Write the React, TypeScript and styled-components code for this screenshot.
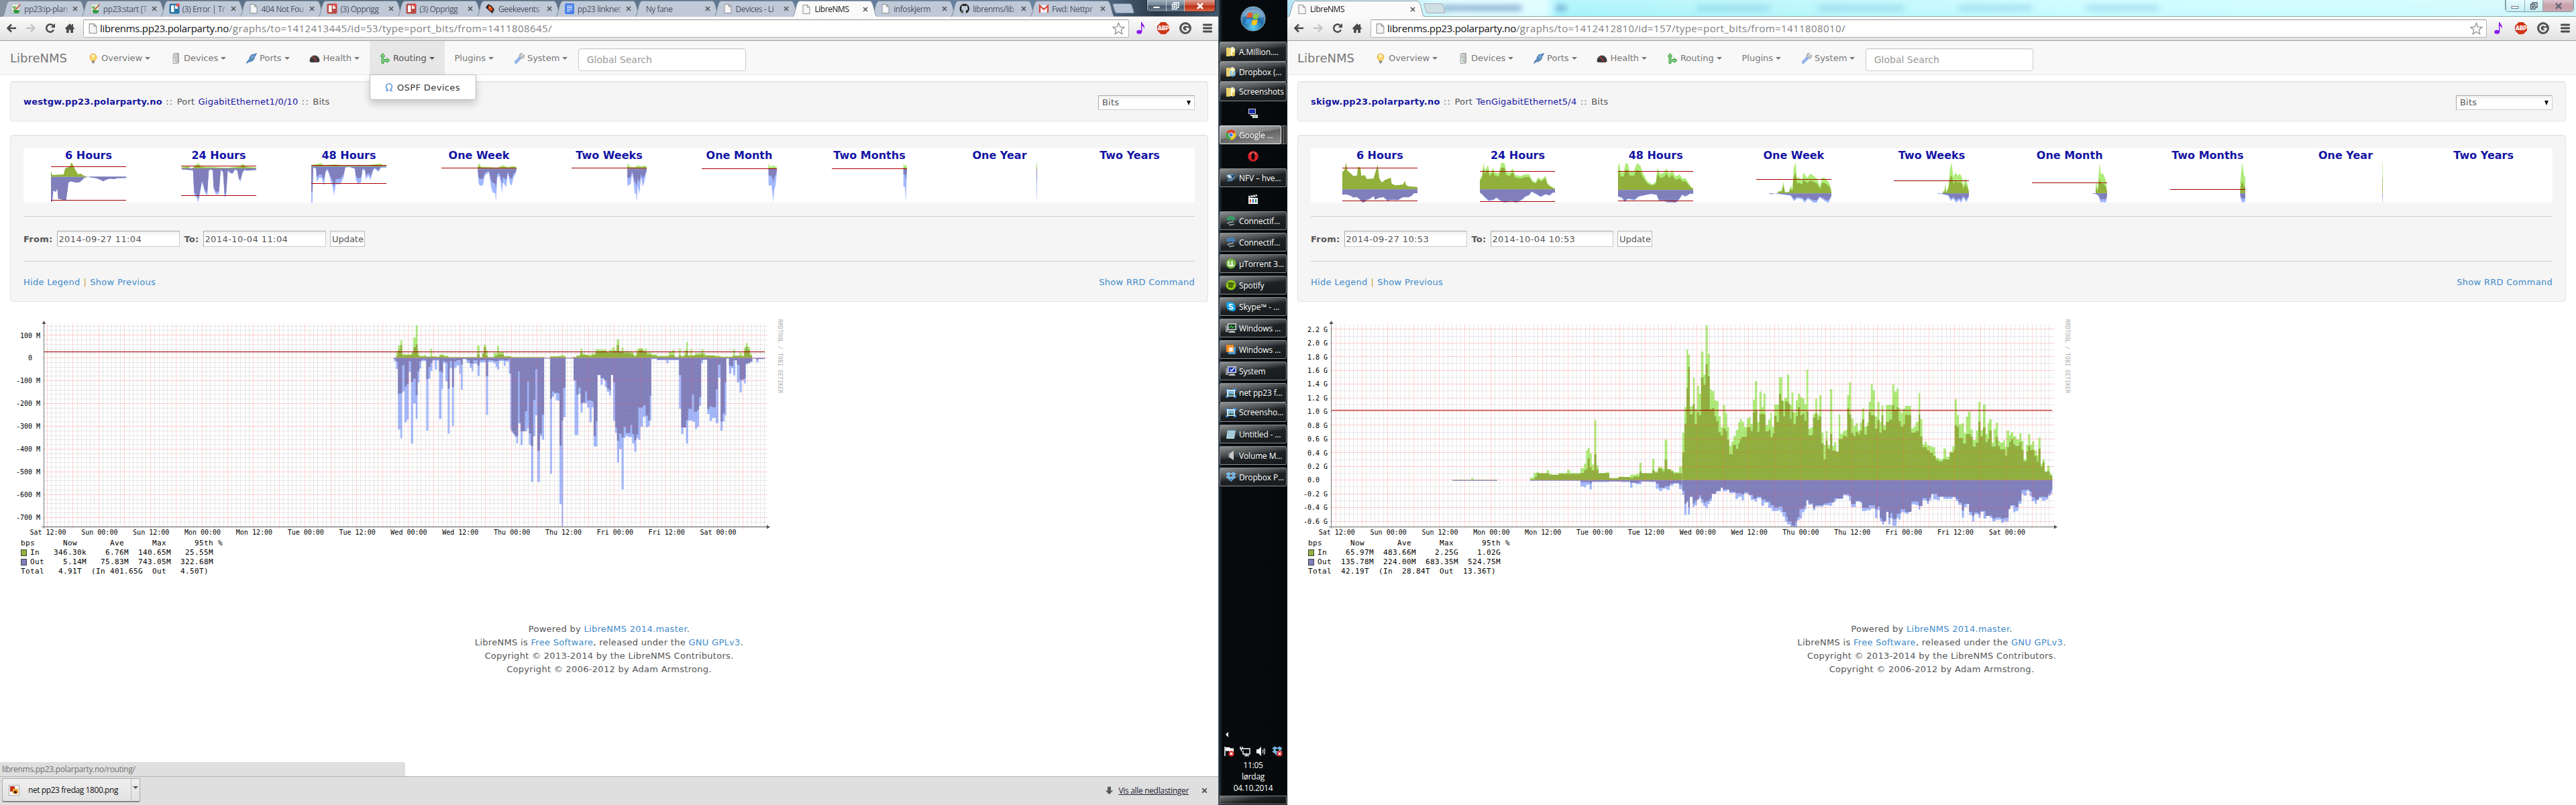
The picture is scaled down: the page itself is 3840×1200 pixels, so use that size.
import React from "react";
import styled, { createGlobalStyle, css } from "styled-components";

const SANS = `"DejaVu Sans", Verdana, sans-serif`;
const UI = `"Open Sans", "Noto Sans", sans-serif`;
const MONO = `"DejaVu Sans Mono", monospace`;

const Global = createGlobalStyle`
  * { box-sizing: border-box; }
  body { margin: 0; background: #fff; font-family: ${SANS}; font-size: 13px; color: #555; }
  svg { display: block; flex: none; }
`;

const Desktop = styled.div`
  display: flex;
  width: 3840px;
  height: 1200px;
  overflow: hidden;
`;

const BrowserWindow = styled.section<{ $w: number }>`
  display: flex;
  flex-direction: column;
  width: ${(p) => p.$w}px;
  height: 1200px;
  background: #fff;
  overflow: hidden;
`;

/* ---------- tab strip ---------- */

const TabStrip = styled.div<{ $light?: boolean }>`
  position: relative;
  display: flex;
  height: 25px;
  padding-left: ${(p) => (p.$light ? 1 : 3)}px;
  border-bottom: 1px solid ${(p) => (p.$light ? "#8fa9ac" : "#8b929b")};
  background: ${(p) =>
    p.$light
      ? "linear-gradient(180deg, rgba(255,255,255,.2), rgba(255,255,255,0)), linear-gradient(90deg,#a9dff6 0,#c9f6fb 11%,#e2fdff 13%,#dcfcff 20%,#a6f3fb 21%,#b6f6fb 40%,#c6fbff 60%,#ccfdff 85%,#d3f6fb 100%)"
      : "linear-gradient(90deg,#8794a2 0,#6b7c91 5%,#50687f 30%,#5f7893 60%,#6784a6 88%,#2b3a49 95%,#40566a 100%)"};
`;

const TabBox = styled.div<{ $w: number; $active?: boolean }>`
  position: relative;
  display: flex;
  align-items: center;
  width: ${(p) => p.$w}px;
  height: ${(p) => (p.$active ? 25 : 24)}px;
  margin-right: -9px;
  padding: 2px 12px 0 13px;
  z-index: ${(p) => (p.$active ? 2 : 1)};
  font: 12px ${UI};
  letter-spacing: -0.45px;
  color: ${(p) => (p.$active ? "#111" : "#48515c")};
`;

const TabShape = styled.svg`
  position: absolute;
  left: 0;
  top: 0;
  z-index: -1;
`;

const TabTitle = styled.span`
  flex: 1;
  min-width: 0;
  margin-left: 4px;
  white-space: nowrap;
  overflow: hidden;
  mask-image: linear-gradient(90deg, #000 80%, transparent 100%);
`;

const NewTab = styled.div<{ $light?: boolean }>`
  width: 29px;
  height: 15px;
  margin: 5px 0 0 ${(p) => (p.$light ? 9 : 7)}px;
  border: 1px solid ${(p) => (p.$light ? "#aab" : "#76879a")};
  border-radius: 3px;
  background: ${(p) => (p.$light ? "#cfdfe4" : "#b5c3d4")};
  transform: skewX(18deg);
`;

const Caption = styled.div<{ $light?: boolean }>`
  display: flex;
  width: 103px;
  height: 18px;
  margin: 0 ${(p) => (p.$light ? 3 : 4)}px 0 auto;
  border: 1px solid ${(p) => (p.$light ? "#7d9aa0" : "#20262e")};
  border-top: 0;
  border-radius: 0 0 5px 5px;
  overflow: hidden;
`;

const CaptionButton = styled.div<{ $light?: boolean; $close?: boolean }>`
  display: flex;
  align-items: center;
  justify-content: center;
  flex: ${(p) => (p.$close ? "0 0 46px" : "1")};
  border-left: 1px solid ${(p) => (p.$light ? "#8fb0b5" : "#c0c8d0")};
  background: ${(p) =>
    p.$close
      ? p.$light
        ? "linear-gradient(#dcc5cf,#c9a0a8 50%,#cba8b2)"
        : "linear-gradient(#e0a091,#c9513b 48%,#b92c12 52%,#d9694a)"
      : p.$light
        ? "linear-gradient(#e6fcff,#c7eef2)"
        : "linear-gradient(#a5b3bf,#6d7f8f 48%,#45566a 52%,#6c8293)"};
`;

const GhostLabel = styled.span<{ $left: number; $w: number; $dark?: boolean }>`
  position: absolute;
  left: ${(p) => p.$left}px;
  top: 8px;
  width: ${(p) => p.$w}px;
  height: 8px;
  border-radius: 5px;
  background: ${(p) => (p.$dark ? "rgba(60, 110, 175, 0.55)" : "rgba(80, 160, 205, 0.3)")};
  filter: blur(4px);
`;

/* ---------- toolbar ---------- */

const Toolbar = styled.div`
  display: flex;
  align-items: center;
  height: 36px;
  padding: 0 7px 1px 9px;
  border-bottom: 1px solid #a1a1a1;
  background: linear-gradient(#fbfbfb, #e2e2e2);
`;

const NavIcons = styled.div`
  display: flex;
  gap: 13px;
  width: 115px;
`;

const AddressBar = styled.div`
  display: flex;
  align-items: center;
  flex: 1;
  height: 27px;
  padding: 0 5px 0 5px;
  border: 1px solid #b5b5b5;
  border-top-color: #979797;
  border-radius: 2px;
  background: #fff;
  font: 15px ${UI};
  letter-spacing: 0.41px;
  color: #808080;
  white-space: pre;
  b { font-weight: 400; color: #111; margin-left: 2px; letter-spacing: -0.3px; }
  svg:last-child { margin-left: auto; }
`;

const Extensions = styled.div`
  display: flex;
  align-items: center;
  gap: 15px;
  padding-left: 9px;
`;

/* ---------- site navigation ---------- */

const Navbar = styled.nav`
  display: flex;
  height: 51px;
  padding-left: 15px;
  border-bottom: 1px solid #e7e7e7;
  background: #f8f8f8;
  color: #777;
`;

const Brand = styled.div`
  width: 101px;
  padding-top: 14px;
  font-size: 18px;
  line-height: 24px;
`;

const NavItem = styled.div<{ $open?: boolean }>`
  position: relative;
  display: flex;
  align-items: center;
  height: 50px;
  padding: 1px 14.8px 0 15px;
  gap: 4px;
  ${(p) => p.$open && css`background: #e7e7e7; color: #555;`}
`;

const Caret = styled.i`
  border: 4px solid transparent;
  border-top-color: currentColor;
  border-bottom: 0;
`;

const Dropdown = styled.div`
  position: absolute;
  left: 0;
  top: 50px;
  z-index: 3;
  display: flex;
  align-items: center;
  gap: 5px;
  width: 159px;
  height: 38px;
  padding-left: 21px;
  border: 1px solid #bbb;
  border-radius: 0 0 4px 4px;
  background: #fff;
  box-shadow: 0 6px 12px rgba(0, 0, 0, 0.18);
  color: #333;
  letter-spacing: 0.4px;
  white-space: nowrap;
`;

const Search = styled.input`
  width: 250px;
  height: 34px;
  margin: 11px 0 0 0.5px;
  padding: 0 12px;
  border: 1px solid #ccc;
  border-radius: 4px;
  box-shadow: inset 0 1px 1px rgba(0, 0, 0, 0.075);
  font: 14px ${SANS};
  &::placeholder { color: #999; opacity: 1; }
`;

/* ---------- page ---------- */

const Well = styled.div<{ $h: number; $mt: number }>`
  height: ${(p) => p.$h}px;
  margin: ${(p) => p.$mt}px 15px 0;
  padding: 19px;
  border: 1px solid #e3e3e3;
  border-radius: 4px;
  background: #f5f5f5;
  box-shadow: inset 0 1px 1px rgba(0, 0, 0, 0.05);
`;

const Crumbs = styled.div`
  display: flex;
  justify-content: space-between;
  align-items: flex-start;
  line-height: 22px;
  letter-spacing: 0.2px;
  span { word-spacing: 1px; }
  i { font-style: normal; letter-spacing: 1.2px; }
  a, b { color: #1515a0; }
  b { letter-spacing: 0.24px; }
`;

const Select = styled.div`
  display: flex;
  align-items: center;
  justify-content: space-between;
  width: 144px;
  height: 22px;
  margin-top: 1px;
  padding: 0 5px;
  border: 1px solid #ccc;
  border-color: #aaa #ccc #ccc #aaa;
  background: linear-gradient(#eee, #fff 6px);
`;

const SelectArrow = styled.div`
  border: 3.5px solid transparent;
  border-top: 7px solid #111;
  border-bottom: 0;
`;

const Strip = styled.div`
  display: grid;
  grid-template-columns: repeat(9, 1fr);
  height: 81px;
  background: #fff;
`;

const StripCell = styled.div`
  display: flex;
  flex-direction: column;
  align-items: center;
  h4 { margin: 0; height: 21px; font: bold 16px/21px ${SANS}; color: #1414a4; white-space: nowrap; }
`;

const Rule = styled.hr`
  height: 1px;
  margin: 20px 0;
  border: 0;
  background: #ccc;
`;

const RangeForm = styled.form`
  display: flex;
  align-items: center;
  height: 26px;
  b { letter-spacing: 0.25px; }
`;

const DateInput = styled.input`
  width: 183px;
  height: 24px;
  margin: 0 6px 0 7px;
  padding: 0 1px;
  border: 1px solid #ccc;
  border-color: #aaa #ccc #ccc #aaa;
  background: linear-gradient(#eee, #fff 7px);
  font: 13px ${SANS};
  letter-spacing: 0.42px;
  color: #555;
`;

const UpdateButton = styled.button`
  width: 52px;
  height: 24px;
  padding: 0;
  border: 1px solid #bbb;
  background: linear-gradient(#f0f0f0, #fff 7px);
  font: 13px ${SANS};
  color: #555;
`;

const Links = styled.div`
  display: flex;
  gap: 5px;
  padding-top: 1px;
  line-height: 20px;
  letter-spacing: 0.28px;
  color: #c93;
  a { color: #428bca; }
  a:last-child { margin-left: auto; }
`;

const GraphArea = styled.div`
  height: 478px;
  padding-top: 10px;
`;

const Legend = styled.div`
  margin-left: 31px;
  font: 11px/14px ${MONO};
  letter-spacing: 0.38px;
  color: #000;
  white-space: pre;
`;

const LegendRow = styled.div`
  display: flex;
  align-items: center;
  height: 14px;
`;

const Swatch = styled.span<{ $c: string }>`
  width: 9px;
  height: 10px;
  margin-right: 5px;
  border: 1px solid #444;
  background: ${(p) => p.$c};
`;

const Footer = styled.footer`
  text-align: center;
  line-height: 20px;
  letter-spacing: 0.3px;
  a { color: #428bca; }
`;

const StatusBubble = styled.div`
  width: 604px;
  height: 21px;
  margin-top: auto;
  padding: 1px 3px;
  border-radius: 0 4px 0 0;
  background: #dfdfdf;
  font: 12px/19px ${UI};
  letter-spacing: -0.3px;
  color: #707070;
`;

const Shelf = styled.div`
  display: flex;
  align-items: center;
  height: 43px;
  padding: 0 14px 2px 3px;
  border-top: 1px solid #b5b5b5;
  background: #dfdfdf;
  font: 12px ${UI};
  color: #111;
`;

const Download = styled.div`
  display: flex;
  align-items: center;
  width: 206px;
  height: 36px;
  margin-right: auto;
  padding-left: 9px;
  border: 1px solid #aaa;
  border-bottom: 2px solid #888;
  border-radius: 3px;
  background: linear-gradient(#efefef, #e2e2e2);
  letter-spacing: -0.42px;
  span { width: 166px; padding-left: 13px; white-space: nowrap; }
`;

const DownloadMenu = styled.div`
  display: flex;
  align-items: center;
  justify-content: center;
  flex: 1;
  height: 100%;
  padding-bottom: 8px;
  border-left: 1px solid #bbb;
  color: #555;
`;

const ShowAll = styled.a`
  margin: 0 17px 0 7px;
  color: #202030;
  text-decoration: underline;
  letter-spacing: -0.32px;
`;

/* ---------- task bar ---------- */

const Taskbar = styled.aside`
  display: flex;
  flex-direction: column;
  width: 103px;
  height: 1200px;
  padding: 8px 1px 1px 1px;
  border-left: 1px solid #4b5a68;
  background: linear-gradient(90deg, #2a3744 0, #070b0e 5px, #05090b 100%);
`;

const Orb = styled.div`
  display: flex;
  justify-content: center;
  height: 54px;
`;

const TaskRow = styled.div<{ $gap: number; $h: number }>`
  display: flex;
  height: ${(p) => p.$h}px;
  margin-bottom: ${(p) => p.$gap}px;
`;

const TaskButton = styled.div<{ $active?: boolean }>`
  display: flex;
  align-items: center;
  gap: 4px;
  flex: 1;
  min-width: 0;
  padding-left: 8px;
  border: 1px solid ${(p) => (p.$active ? "#e8e8e8" : "#8a8d8f")};
  border-radius: 2px;
  background: ${(p) =>
    p.$active
      ? "linear-gradient(170deg,#b9b9b9,#858585 45%,#626262 50%,#949494)"
      : "linear-gradient(172deg,#8e9192 0,#4a4e50 35%,#1d2123 52%,#171b1d 100%)"};
  color: #fff;
  font: 12px ${UI};
  white-space: nowrap;
  letter-spacing: -0.15px;
`;

const TaskLoose = styled.div`
  display: flex;
  align-items: center;
  justify-content: center;
  flex: 1;
`;

const Stack = styled.span`
  width: 4px;
  border: 1px solid #777;
  border-left: 0;
  background: #333;
`;

const Tray = styled.div`
  display: flex;
  justify-content: space-between;
  padding: 13px 6px 0 6px;
`;

const TrayArrow = styled.i`
  width: 0;
  margin: auto 0 0 9px;
  border: 4px solid transparent;
  border-right-color: #fff;
  border-left: 0;
`;

const Clock = styled.div`
  padding-top: 4px;
  height: 58px;
  color: #fff;
  font: 12px/17px ${UI};
  letter-spacing: -0.25px;
  text-align: center;
`;

const ShowDesktop = styled.div`
  height: 13px;
  border: 1px solid #7b7f82;
  background: linear-gradient(170deg, #777, #222 50%, #111);
`;

/* ---------- icons ---------- */

type IconName =
  | "doc" | "wiki" | "trello" | "trelloRed" | "geek" | "gdoc" | "github" | "gmail"
  | "bulb" | "server" | "plug" | "gauge" | "route" | "wrench" | "omega"
  | "folder" | "folderBox" | "putty" | "chrome" | "opera" | "bird" | "clap"
  | "hotspot" | "hotspotBlue" | "utorrent" | "spotify" | "skype" | "monitor" | "vm"
  | "system" | "picture" | "notepad" | "speaker" | "dropbox" | "png"
  | "flag" | "net" | "volume" | "dropboxErr"
  | "back" | "forward" | "reload" | "home" | "star" | "note" | "abp" | "g" | "menu"
  | "down" | "x";

const boxes = (
  <g fill="#5db4f0" stroke="#cfeaff" strokeWidth=".6">
    <path d="M4.6 1 8 3.3 4 6 .8 3.6zM11.4 1 8 3.3 12 6l3.2-2.4zM4 6l4 2.6-3.4 2.4L.8 8.4zM12 6 8 8.6l3.4 2.4 3.8-2.6z" />
    <path d="M4.8 11.6 8 9.4l3.2 2.2L8 14.4z" fill="#2b85d0" />
  </g>
);
const folder = (
  <g>
    <path d="M1 2h6v13H1z" fill="#e9cf6b" />
    <path d="M7 3h7v11H7z" fill="#f8e9a3" />
    <path d="M8 1.500 12 1v14l-4-1z" fill="#fdf6c9" />
    <path d="M10 9h4v5h-4z" fill="#e3c24f" />
  </g>
);
const monitor = (screen: string, mark: React.ReactNode) => (
  <g>
    <path d="M0 4h4v10H0z" fill="#8c8f92" />
    <path d="M3 1h13v10H3z" fill="#d3d6d8" />
    <path d="M4.500 2.500h10v7h-10z" fill={screen} />
    <path d="M6 12h7l2 3H4z" fill="#b4b8bb" />
    {mark}
  </g>
);
const errorDot = (
  <g>
    <circle cx="11.500" cy="11.500" r="4.300" fill="#d22" />
    <path d="m9.800 9.800 3.400 3.400m0-3.400-3.400 3.400" stroke="#fff" strokeWidth="1.500" />
  </g>
);
const trello = (c: string) => (
  <g>
    <rect x=".5" y=".5" width="15" height="15" rx="2" fill={c} />
    <path d="M3 3h4.500v10H3zM9 3h4v5H9z" fill="#fff" />
    <circle cx="13" cy="2.500" r="2.500" fill="#ee4f4f" />
  </g>
);
const hotspot = (c: string) => (
  <g fill="none">
    <path d="M2 6c3-5 9-5 12 0M4 7.500c2-3 6-3 8 0" stroke={c} strokeWidth="2.200" />
    <path d="M3 13c2-5 5-1 9-4M5 15c3-2 5 0 8-2" stroke="#8d979b" strokeWidth="1.800" />
  </g>
);

const drawings: Record<IconName, React.ReactNode> = {
  doc: <path d="M3 1.500h6.500L13 5v9.500H3zM9.500 1.500V5H13" fill="#f6f6f6" stroke="#8e8e8e" />,
  wiki: (
    <g>
      <path d="M2 1h11v13H1z" fill="#e8efe0" stroke="#9aa" strokeWidth=".6" />
      <path d="m2 5 4 5 2-6z" fill="#69b15e" />
      <path d="M14 1 7 8l-1 2 3-1 6-7z" fill="#c4583a" />
      <path d="M3 11c3-2 7-1 11 0l-3 4H6z" fill="#2f9b41" />
    </g>
  ),
  trello: trello("#2a78a8"),
  trelloRed: trello("#b94a45"),
  geek: (
    <g>
      <path d="m5 1 5 3 4 5-3 6-6-5-4-4z" fill="#222" />
      <path d="m5 3 4 2 3 4-2 3-5-3z" fill="#e2431e" />
      <path d="m6 4 3 2-2 3z" fill="#f5a21d" />
    </g>
  ),
  gdoc: (
    <g>
      <rect x="1" width="14" height="16" rx="1.500" fill="#4a82ea" />
      <path d="M4 4h8M4 6.500h8M4 9h8M4 11.500h5" stroke="#fff" />
    </g>
  ),
  github: (
    <path
      d="M8 .5C3.900.5.6 3.800.6 8c0 3.300 2.100 6.100 5 7v-2.200c-2 .4-2.500-.9-2.500-.9-.5-1-1-1.200-1-1.200 1.500.2 1.700 1.100 2.300 1.400.5.200 1 .1 1.400-.1.100-.5.300-.8.500-1-2-.2-3.300-1.200-3.300-3.500 0-.9.300-1.600.8-2.200-.2-.5-.3-1.200.1-2.100 0 0 1 0 2 .8a7 7 0 0 1 4 0c1-.8 2-.8 2-.8.4.9.3 1.600.1 2.100.5.600.8 1.300.8 2.200 0 2.300-1.400 3.300-3.400 3.500.4.400.6 1 .6 1.800V15c2.900-1 5-3.700 5-7 0-4.200-3.300-7.500-7.400-7.500z"
      fill="#222"
    />
  ),
  gmail: (
    <g>
      <path d="M1 2.500h14v11H1z" fill="#f3f3f3" />
      <path d="M2 14V3.500L8 9l6-5.500V14" fill="none" stroke="#d64a3c" strokeWidth="2.200" />
    </g>
  ),
  bulb: (
    <g>
      <path d="M8 1a5.200 5.200 0 0 0-3 9.300l.7 1.700h4.600l.7-1.700A5.200 5.200 0 0 0 8 1z" fill="#fcd768" stroke="#e0a03e" strokeWidth=".8" />
      <path d="M6 3.200c1-1 3-1 4 .3L8 8z" fill="#fffbe0" />
      <path d="M6 11.500h4V14L8.800 15.500H7.200L6 14z" fill="#8e8e88" />
    </g>
  ),
  server: (
    <g>
      <path d="M4 1.500 7 .5h5.500v14L10 15.500H4z" fill="#b7b7b7" stroke="#8a8a8a" strokeWidth=".7" />
      <path d="M4.500 2h5v13h-5z" fill="#e4e4e4" />
      <path d="M5 4h4M5 6h4M5 8h4" stroke="#999" strokeWidth=".8" />
      <circle cx="8" cy="11.500" r="1.100" fill="#5cb85c" />
    </g>
  ),
  plug: (
    <g>
      <path d="M15.500.5 12 2 8 2.500l-3 4 .5 1.500L2 12 .5 15.500 4 13l4-.5 4-3.500.5-3z" fill="#5f8fcd" stroke="#34639f" strokeWidth=".8" />
      <path d="m7 5 4 4M9 3.500l3 3" stroke="#b5d2f4" />
      <path d="m7 7 3 3" stroke="#3c8b57" strokeWidth="1.400" />
    </g>
  ),
  gauge: (
    <g>
      <path d="M.5 12.500c0-12 15-12 15 0l-2 1.500h-11z" fill="#3a3a3a" />
      <path d="M3 5.500 5 7M8 3v2M13 5.500 11 7" stroke="#999" strokeWidth=".8" />
      <path d="m5 5 6 8" stroke="#e43737" strokeWidth="1.200" />
    </g>
  ),
  route: (
    <path d="M5 15.500H3V5H1l3.500-4.500L8 5H6v3.500c0 .8 1 1 2 1h3V7.500l4 3.500-4 3.500v-2H8c-1.500 0-2-.5-2-.5v3.500z" fill="#7cd07b" stroke="#3c9a47" />
  ),
  wrench: (
    <g>
      <path d="M14 2.500 12.500 5l-2-.5V2L13 .6C10.500-.2 8.300 1 8 3.500L8.300 6l1.900 2 2.800.2C15.300 8 16 5 15.500 3z" fill="#c4c9ce" stroke="#8c9298" strokeWidth=".7" />
      <path d="m8 6 2.500 2.500L4 15.300c-1.500.8-3.300-1-2.500-2.500z" fill="#9dbcf3" stroke="#5c84cf" strokeWidth=".8" />
    </g>
  ),
  omega: <path d="M2.500 14h3.200v-1.500C3.500 10.500 3 9 3 7a5 5 0 0 1 10 0c0 2-.5 3.500-2.700 5.500V14h3.200" fill="none" stroke="#5b93dd" strokeWidth="1.800" />,
  folder,
  folderBox: (
    <g>
      {folder}
      <g transform="translate(5 6) scale(.68)">{boxes}</g>
    </g>
  ),
  putty: (
    <g>
      <path d="M1 1h11v8H1z" fill="#ccc" />
      <path d="M2 2h9v6H2z" fill="#1a2ba8" />
      <path d="M4 10h5v2H4zM7 10h8v5H7z" fill="#ddd" />
      <path d="m9 12 2 1.500 2-2" stroke="#3a3" fill="none" />
    </g>
  ),
  chrome: (
    <g>
      <circle cx="8" cy="8" r="7.500" fill="#f2c81d" />
      <path d="M8 8 1.500 4.200A7.500 7.500 0 0 1 14.700 4.600z" fill="#db3b2c" />
      <path d="M8 8 1.500 4.200A7.500 7.500 0 0 0 7.300 15.500z" fill="#3fa34c" />
      <circle cx="8" cy="8" r="3.500" fill="#fff" />
      <circle cx="8" cy="8" r="2.700" fill="#3a7be0" />
    </g>
  ),
  opera: (
    <g>
      <circle cx="8" cy="8" r="7.800" fill="#d8202c" />
      <path d="M2 5a7 7 0 0 1 12 0z" fill="#f08a86" opacity=".6" />
      <ellipse cx="8" cy="8" rx="2.500" ry="5.200" fill="#05090b" />
    </g>
  ),
  bird: (
    <g>
      <path d="M1 6c3-5 10-6 14-1-2 6-5 9-9 8l-4 1 2-4z" fill="#53809f" />
      <path d="M2 4c4-1 7 1 8 4-4 1-7 0-8-4z" fill="#d4dde4" />
      <path d="m8 5 7-2-5 6z" fill="#25486a" />
    </g>
  ),
  clap: (
    <g>
      <path d="M1 6h14v9H1z" fill="#eee" />
      <path d="M1 3 14 1v3L1 6z" fill="#ddd" />
      <path d="M3 3l2 2M7 2.500l2 2M11 2l2 2" stroke="#111" />
      <path d="M3 8h2v5H3z" fill="#e2562c" />
      <path d="M7 8h2v5H7z" fill="#2d68d0" />
      <path d="M11 8h2v5h-2z" fill="#27964a" />
    </g>
  ),
  hotspot: hotspot("#2fb56a"),
  hotspotBlue: hotspot("#3f8fd9"),
  utorrent: (
    <g>
      <circle cx="8" cy="8" r="7.500" fill="#71b83b" />
      <path d="M4.500 4v5c0 3 5 3 5 0V4M9.500 9c.5 2 2 2 2.500 1" fill="none" stroke="#fff" strokeWidth="2" />
    </g>
  ),
  spotify: (
    <g>
      <circle cx="8" cy="8" r="7.500" fill="#8fc514" />
      <path d="M3.500 5.500c3-1 6-.6 9 .8M4 8.200c2.500-.8 5-.5 7.500.7M4.500 10.700c2-.5 4-.3 6 .7" fill="none" stroke="#1d2a05" strokeWidth="1.400" />
    </g>
  ),
  skype: (
    <g>
      <circle cx="8" cy="8" r="6.500" fill="#17a5e8" />
      <circle cx="5" cy="5" r="4" fill="#17a5e8" />
      <circle cx="11" cy="11" r="4" fill="#17a5e8" />
      <path d="M10.500 5.500C9 4 5.500 4.200 5.500 6.200S10.700 8 10.700 10 7 12 5.300 10.300" fill="none" stroke="#fff" strokeWidth="1.700" />
    </g>
  ),
  monitor: monitor("#123018", <path d="M5 7h2l1-3 2 4 1-2h3" fill="none" stroke="#3e6" />),
  vm: (
    <g>
      <rect x="1" y="1" width="11" height="11" fill="#f28a20" />
      <rect x="4" y="4" width="11" height="11" fill="#4b9bd9" />
      <rect x="4" y="4" width="8" height="8" fill="#f6a94b" />
      <rect x="5.500" y="5.500" width="5" height="5" fill="#fff" />
    </g>
  ),
  system: monitor("#1733b5", <path d="m7 6 2 2 4-5" fill="none" stroke="#fff" strokeWidth="1.300" />),
  picture: (
    <g>
      <path d="M0 2h5v3H0zM11 1h5v4h-5zM0 12h4v3H0zM12 11h4v4h-4z" fill="#3a86d8" />
      <path d="M2 3h12v10H2z" fill="#e9f3fa" />
      <path d="M3.500 4.500h9v7h-9z" fill="#7db6de" />
      <path d="m3.500 11.500 3-3 3 1.500 3-1v2.500z" fill="#2c5f49" />
    </g>
  ),
  notepad: (
    <g>
      <path d="M3 2h12l-2 13H1z" fill="#b7dbe6" />
      <path d="M4 5h10M3.600 7.500h10M3.300 10h10M3 12.500h10" stroke="#7fa9b8" strokeWidth=".8" />
      <path d="M3 1h12v2H3z" fill="#5f7f8c" />
    </g>
  ),
  speaker: (
    <g>
      <path d="M4 5h2v6H4z" fill="#888" />
      <path d="m6 5 6-4v14l-6-4z" fill="#c6c9cb" />
    </g>
  ),
  dropbox: boxes,
  png: (
    <g>
      <rect x=".5" y=".5" width="15" height="15" fill="#fff" stroke="#aaa" />
      <path d="M2 2h7v8H2z" fill="#c0341d" />
      <path d="M6 6h8v7H6z" fill="#efa21d" />
      <circle cx="10" cy="11" r="2.300" fill="#5a1f10" />
    </g>
  ),
  flag: (
    <g>
      <path d="M2 1v14" stroke="#fff" strokeWidth="1.500" />
      <path d="M3 2h6l1 1.500h5V9H9L8 7.500H3z" fill="#fff" />
      {errorDot}
    </g>
  ),
  net: (
    <g fill="none" stroke="#fff" strokeWidth="1.400">
      <path d="M4.500 4H15v8H5V7M7 14.500h7M10 12v2" />
      <path d="M1 1v3h3V1M2.500 4v4" />
    </g>
  ),
  volume: (
    <g>
      <path d="M1 5h3l4-4v14l-4-4H1z" fill="#fff" />
      <path d="M10 5.500c1.300 1.500 1.300 3.500 0 5M12 3.500c2.200 2.500 2.200 6.500 0 9" fill="none" stroke="#ddd" strokeWidth="1.200" />
    </g>
  ),
  dropboxErr: (
    <g>
      {boxes}
      {errorDot}
    </g>
  ),
  back: <path d="M15 8H3M8 2.500 2.500 8 8 13.500" fill="none" stroke="#4a4a4a" strokeWidth="2.600" />,
  forward: <path d="M1 8h12M8 2.500 13.500 8 8 13.500" fill="none" stroke="#c3c3c3" strokeWidth="2.300" />,
  reload: (
    <g>
      <path d="M13 10.500A5.700 5.700 0 1 1 12 4" fill="none" stroke="#4a4a4a" strokeWidth="2.500" />
      <path d="M15 .8v6.500H8.500z" fill="#4a4a4a" />
    </g>
  ),
  home: <path d="M8 1 .8 8.500l1.200 1.200 1-.9V15h3.700v-4.500h2.600V15H13V8.800l1 .9 1.200-1.200L13 6V2h-2v2z" fill="#4a4a4a" />,
  star: <path d="m8 1 2 5 5.200.3-4 3.400 1.300 5.300L8 12l-4.500 3 1.300-5.300-4-3.400L6 6z" fill="#fff" stroke="#8a8a8a" />,
  note: (
    <g fill="#8a18f0">
      <ellipse cx="5.500" cy="13" rx="3.500" ry="2.600" />
      <path d="M8 0h1.300c.3 3 4.500 4 2.700 9 0-3-1.500-3.500-2.800-4V13H8z" />
    </g>
  ),
  abp: <path d="M5 0h6l5 5v6l-5 5H5l-5-5V5z" fill="#cf3517" />,
  g: (
    <g>
      <circle cx="8" cy="8" r="8" fill="#555" />
      <path d="M11.500 5.500A4.200 4.200 0 1 0 12 9.500V8.500H8.500" fill="none" stroke="#fff" strokeWidth="1.900" />
    </g>
  ),
  menu: <path d="M3 3.500h10M3 8h10M3 12.500h10" stroke="#4a4a4a" strokeWidth="2.600" strokeLinecap="round" />,
  down: <path d="M5 1h6v7h4l-7 7-7-7h4z" fill="#5a5a5a" />,
  x: <path d="m4 4 8 8m0-8-8 8" stroke="#555" strokeWidth="2.200" />,
};

const Icon = ({ name, size = 16 }: { name: IconName; size?: number }) => (
  <svg width={size} height={size} viewBox="0 0 16 16">{drawings[name]}</svg>
);

const AbpBadge = styled.span`
  display: grid;
  place-items: center;
  width: 18px;
  height: 18px;
  color: #fff;
  font: bold 8px ${SANS};
  letter-spacing: -0.6px;
  > * { grid-area: 1 / 1; }
`;

/* ---------- chart helpers ---------- */

const IN_MAX = "#aeec78";
const IN_AVG = "#91b03c";
const OUT_MAX = "#a2b8ff";
const OUT_AVG = "#807fbc";

const parse = (s: string) =>
  s.split(",").map((p) => {
    const [x, h] = p.trim().split(" ").map(Number);
    return [x, h || 0] as [number, number];
  });

const stepPath = (s: string, zero: number, x0: number, kx: number, dir: number) => {
  const pts = parse(s);
  let d = `M${(x0 + pts[0][0] * kx).toFixed(1)} ${zero}`;
  pts.forEach(([x, h]) => {
    d += `H${(x0 + x * kx).toFixed(1)}V${(zero + (dir * h) / 3).toFixed(1)}`;
  });
  return d + `V${zero}Z`;
};

interface Segment {
  x0: number;
  kx: number;
  inMax: string;
  inAvg: string;
  outMax: string;
  outAvg: string;
}

interface Plot {
  zero: number;
  firstLabel: number;
  labels: { y: number; text: string }[];
  minorY: number;
  majorY: number;
  limit: number;
  segments: Segment[];
}

const NB = "\u00a0\u00a0";

const westPlot: Plot = {
  zero: 533.6,
  firstLabel: 70.5,
  minorY: 6.79,
  majorY: 33.93,
  limit: 524.5,
  labels: ["100 M", "0" + NB, "-100 M", "-200 M", "-300 M", "-400 M", "-500 M", "-600 M", "-700 M"].map((text, i) => ({ text, y: 499.7 + i * 33.93 })),
  segments: [
    {
      x0: 560,
      kx: 0.3954,
      inMax:
        "70 0,78 30,84 56,93 79,100 17,136 28,142 92,151 146,158 34,164 10,182 14,190 5,207 42,213 8,225 10,231 3,240 16,258 10,274 4,330 3,345 5,383 56,392 4,402 22,408 59,416 34,423 4,444 22,458 54,465 26,483 9,510 5,637 0,658 8,690 10,700 16,706 10,716 0,740 4,757 12,770 20,773 42,779 20,790 12,800 16,815 20,829 38,850 36,862 38,870 28,880 36,893 48,901 34,909 83,918 32,927 47,934 30,960 26,972 14,984 38,992 44,1008 34,1016 42,1022 24,1040 16,1060 10,1105 28,1118 35,1127 6,1144 42,1150 10,1164 34,1171 71,1177 12,1186 40,1192 14,1204 22,1228 38,1236 20,1245 12,1280 10,1300 6,1347 38,1354 8,1372 24,1380 12,1389 46,1395 66,1402 50,1411 18,1419 0",
      inAvg:
        "70 0,78 10,84 34,93 58,100 12,136 22,142 48,151 61,158 14,164 6,225 5,240 10,258 6,274 3,383 16,392 3,402 20,408 48,416 10,423 3,450 10,460 16,483 6,510 3,637 0,658 6,716 0,740 3,757 8,770 14,773 24,779 14,800 8,815 14,829 26,850 30,870 24,893 30,909 58,918 28,934 22,960 18,972 8,984 24,992 36,1008 28,1022 16,1040 10,1060 6,1105 12,1127 3,1144 14,1150 6,1164 14,1171 34,1177 10,1204 14,1228 20,1236 10,1280 6,1300 4,1347 10,1380 6,1389 34,1395 50,1402 36,1411 10,1419 0",
      outMax:
        "68 14,77 50,84 320,93 360,100 150,109 288,117 276,125 62,133 382,141 204,151 273,158 110,165 48,172 14,191 325,199 92,207 58,214 12,223 52,231 12,239 273,248 140,254 24,263 105,272 339,279 46,288 305,295 44,305 34,315 70,321 142,328 6,343 22,355 44,362 60,368 26,384 81,392 20,416 255,424 18,444 24,452 40,458 52,465 14,483 36,490 16,502 70,507 320,515 338,523 352,530 382,537 292,546 390,554 328,571 314,578 388,586 555,594 350,602 256,610 555,619 350,627 365,635 3,658 519,665 174,673 160,679 190,693 654,701 752,707 265,716 3,746 100,750 345,764 160,773 244,780 202,797 222,806 288,814 220,822 396,836 76,848 120,856 94,864 130,872 152,880 168,887 76,895 280,903 336,910 468,918 408,927 588,935 358,943 348,951 354,967 382,975 420,983 358,990 366,998 308,1008 262,1018 310,1027 306,1034 280,1039 5,1060 10,1096 24,1104 10,1144 228,1152 340,1160 312,1170 382,1178 280,1196 286,1204 318,1212 308,1219 215,1227 24,1234 8,1250 250,1259 282,1268 268,1282 292,1292 88,1300 325,1308 284,1316 256,1322 4,1332 70,1341 46,1348 78,1356 6,1362 110,1372 154,1380 98,1388 114,1395 28,1404 22,1412 18,1420 3,1435 20,1443 5,1467 0",
      outAvg:
        "68 4,77 16,84 160,93 158,100 32,109 128,117 116,125 14,133 108,141 92,151 166,158 60,165 16,172 8,191 94,199 40,207 22,214 8,239 60,248 66,254 14,263 20,272 136,279 14,288 130,295 16,305 10,321 30,328 4,343 10,355 26,368 10,384 34,392 10,416 82,424 10,444 14,465 8,483 10,502 6,507 70,512 329,520 340,526 349,537 60,543 290,546 328,556 328,563 238,571 105,578 338,586 394,594 188,602 50,610 415,619 338,627 253,635 2,658 183,665 150,673 156,690 160,693 391,701 280,707 133,716 2,746 100,757 164,764 132,773 202,780 198,790 150,797 190,814 194,822 350,830 284,836 76,848 90,862 100,872 136,880 144,887 76,895 108,903 310,910 370,918 338,927 355,935 308,943 336,960 300,967 340,975 368,983 342,990 222,1008 212,1018 258,1027 280,1034 170,1039 3,1060 7,1144 76,1152 310,1170 278,1178 228,1192 164,1200 240,1212 232,1219 175,1227 8,1250 228,1259 216,1268 220,1282 140,1290 30,1300 284,1308 248,1316 108,1322 2,1332 36,1348 10,1362 30,1372 98,1388 92,1395 24,1412 16,1420 2,1435 8,1443 4,1467 0",
    },
  ],
};

const skiPlot: Plot = {
  zero: 715.7,
  firstLabel: 72.8,
  minorY: 10.22,
  majorY: 20.43,
  limit: 611.5,
  labels: ["2.2 G", "2.0 G", "1.8 G", "1.6 G", "1.4 G", "1.2 G", "1.0 G", "0.8 G", "0.6 G", "0.4 G", "0.2 G", "0.0" + NB, "-0.2 G", "-0.4 G", "-0.6 G"].map((text, i) => ({ text, y: 490.9 + i * 20.43 })),
  segments: [
    {
      x0: 0,
      kx: 0.7653,
      inMax:
        "322 2,358 10,362 2,409 0,473 12,480 32,485 36,490 32,505 44,510 28,516 24,528 32,545 46,551 32,571 54,578 74,582 134,585 143,589 120,593 70,598 268,602 66,606 32,620 36,627 10,645 16,655 14,668 24,678 28,686 78,690 32,711 95,715 40,722 60,730 52,735 181,740 50,747 44,752 36,763 61,769 0",
      inAvg:
        "322 2,409 0,473 4,482 14,486 30,510 24,528 28,551 28,571 32,578 44,582 50,585 98,589 58,593 44,598 116,602 48,606 30,627 8,645 14,668 10,674 16,686 40,690 30,711 46,715 34,722 52,730 40,735 92,740 48,747 40,752 30,769 0",
      outMax:
        "322 2,409 0,473 2,571 28,578 32,582 20,589 42,593 8,606 8,627 4,650 8,668 34,672 10,678 18,690 6,705 8,718 38,724 48,730 38,740 44,745 24,752 16,763 40,769 0",
      outAvg: "322 2,409 0,473 2,571 8,589 14,593 6,668 12,686 6,718 16,724 34,735 26,745 16,752 12,763 20,769 0",
    },
    {
      x0: 560,
      kx: 0.33333,
      inMax:
        "86 212,96 328,105 584,112 562,120 330,135 458,142 318,152 422,161 386,170 575,181 472,191 692,200 565,209 406,218 398,230 358,238 354,248 286,258 238,268 336,278 300,287 238,296 152,306 172,315 198,326 224,336 258,344 274,352 262,362 238,375 276,383 282,392 252,402 360,411 443,420 260,431 396,441 326,449 388,458 246,470 270,481 302,487 240,497 338,519 460,533 354,543 368,555 472,565 336,575 392,583 302,594 356,603 386,613 372,622 366,632 340,641 494,649 230,661 236,671 296,681 365,689 292,699 380,708 212,718 158,728 220,736 156,747 407,757 152,766 170,775 128,785 294,793 208,805 220,815 224,824 380,832 438,841 274,852 242,862 254,872 222,881 258,890 320,900 240,912 260,920 350,929 430,938 402,948 284,959 350,968 260,977 334,985 246,997 336,1025 428,1034 396,1045 410,1053 322,1063 300,1072 320,1082 332,1109 230,1120 240,1130 260,1143 390,1150 272,1160 160,1170 172,1180 156,1192 152,1200 0",
      inAvg:
        "86 124,96 252,105 412,112 506,120 294,133 340,142 250,152 304,161 290,170 458,181 426,191 518,200 464,209 316,218 322,230 286,238 264,248 214,258 200,268 232,278 220,287 180,296 116,312 158,326 140,336 164,344 184,352 194,375 236,392 220,402 304,411 310,422 216,431 296,449 294,458 218,473 226,481 192,490 208,497 288,508 260,519 386,528 356,538 286,546 352,560 342,568 274,575 306,583 250,594 286,603 326,613 290,622 296,632 266,641 308,650 200,666 204,671 280,681 300,689 270,699 284,708 166,718 94,728 178,736 140,747 208,757 132,775 126,785 184,805 200,815 194,824 322,832 294,841 210,852 198,862 216,872 206,881 222,890 272,900 204,912 242,920 304,929 290,948 230,959 270,968 212,977 290,985 224,997 260,1012 270,1025 336,1034 314,1045 326,1053 264,1063 240,1075 250,1082 292,1109 212,1130 220,1143 294,1150 196,1160 148,1180 134,1192 122,1200 0",
      outMax:
        "86 66,96 156,105 100,112 154,120 74,133 120,142 112,152 86,161 80,170 102,180 116,191 126,200 106,209 94,218 62,238 50,258 36,268 50,287 40,296 58,324 84,336 74,352 90,362 60,383 68,392 88,411 96,420 80,440 114,452 100,470 124,487 138,515 134,525 144,535 162,545 186,555 198,570 206,585 209,600 180,610 172,622 144,632 132,641 92,650 110,671 134,681 118,699 118,718 112,740 114,757 94,775 84,805 68,824 72,832 92,841 120,862 96,881 102,890 138,910 134,930 126,948 170,959 134,970 184,980 198,990 180,1000 138,1008 198,1017 170,1026 205,1045 168,1053 176,1063 144,1082 150,1100 138,1111 108,1130 112,1143 132,1150 110,1160 90,1180 106,1190 90,1200 0",
      outAvg:
        "86 48,96 106,105 94,114 122,120 74,133 104,142 92,152 86,161 68,170 86,181 100,191 94,200 92,209 82,218 60,238 48,258 32,268 42,296 52,324 58,352 64,362 54,383 66,402 82,420 74,440 86,460 96,481 112,497 122,515 118,535 142,550 164,558 184,575 204,592 184,600 166,610 128,632 116,641 88,650 104,671 124,681 112,718 104,740 100,766 82,805 62,832 70,841 106,862 92,881 96,890 124,920 112,948 130,959 118,970 170,980 184,997 142,1008 168,1017 148,1026 174,1045 150,1063 130,1082 142,1111 96,1143 116,1160 80,1180 94,1190 78,1200 0",
    },
    {
      x0: 0,
      kx: 0.7653,
      inMax:
        "1254.4 148,1262 100,1270 94,1278 142,1283 104,1290 128,1295 150,1300 362,1304 292,1308 250,1313 254,1318 210,1322 284,1326 307,1331 226,1335 180,1341 222,1346 350,1350 224,1355 338,1360 206,1364 256,1367 272,1372 168,1376 228,1380 257,1384 176,1388 168,1395 180,1398 150,1401 221,1406 200,1409 214,1414 196,1420 182,1426 210,1430 176,1434 94,1439 158,1443 206,1447 160,1451 174,1455 134,1460 112,1463 190,1467 72,1471 94,1475 40,1480 64,1485 30,1488 20,1490 0",
      inAvg:
        "1254.4 122,1258 108,1263 90,1268 84,1277 94,1283 92,1290 122,1298 136,1300 246,1304 238,1308 188,1316 164,1322 206,1331 194,1335 150,1341 168,1346 262,1350 196,1355 236,1360 170,1364 184,1367 222,1372 150,1380 194,1384 152,1388 138,1398 110,1402 148,1406 172,1410 184,1414 160,1418 152,1426 170,1430 136,1434 84,1440 128,1443 152,1447 134,1451 136,1455 108,1460 82,1463 140,1467 60,1471 80,1475 36,1480 40,1485 22,1490 0",
      outMax:
        "1254.4 64,1258 86,1266 90,1271 70,1278 84,1296 76,1302 94,1307 110,1314 168,1318 120,1324 104,1328 156,1334 186,1338 152,1346 168,1350 142,1356 172,1362 150,1368 168,1373 184,1380 176,1390 190,1397 182,1401 186,1405 124,1408 116,1414 144,1418 138,1424 106,1430 60,1434 70,1440 48,1446 72,1450 94,1456 106,1460 86,1464 80,1470 92,1476 86,1482 70,1487 60,1490 0",
      outAvg:
        "1254.4 60,1266 74,1278 74,1302 84,1307 100,1314 136,1318 106,1328 142,1334 160,1338 144,1346 152,1350 138,1360 160,1368 158,1373 170,1380 166,1390 172,1397 168,1405 130,1408 112,1418 120,1424 92,1430 44,1440 42,1446 52,1450 76,1456 88,1464 74,1476 76,1482 60,1487 44,1490 0",
    },
  ],
};

const DAYS = ["Sat 12:00", "Sun 00:00", "Sun 12:00", "Mon 00:00", "Mon 12:00", "Tue 00:00", "Tue 12:00", "Wed 00:00", "Wed 12:00", "Thu 00:00", "Thu 12:00", "Fri 00:00", "Fri 12:00", "Sat 00:00"];

const TOP = 483;
const BOTTOM = 785;
const LEFT = 66;
const RIGHT = 1140;

const TrafficGraph = ({ plot }: { plot: Plot }) => {
  const hour = 6.404;
  const vertical: { x: number; major: boolean }[] = [];
  for (let i = 0; i < 170; i++) {
    const x = Math.floor(plot.firstLabel + i * hour) + 0.5;
    if (x < RIGHT) vertical.push({ x, major: i % 6 === 0 });
  }
  const horizontal: { y: number; major: boolean }[] = [];
  const ratio = Math.round(plot.majorY / plot.minorY);
  for (let i = -60; i < 60; i++) {
    const y = Math.floor(plot.zero + i * plot.minorY) + 0.5;
    if (y > TOP && y < BOTTOM) horizontal.push({ y, major: i % ratio === 0 });
  }
  return (
    <svg width="1200" height="343" viewBox="0 460 1200 343" fontFamily={MONO} fontSize="10">
      {plot.segments.map((s, i) => (
        <g key={i}>
          <path d={stepPath(s.inMax, plot.zero, s.x0, s.kx, -1)} fill={IN_MAX} />
          <path d={stepPath(s.inAvg, plot.zero, s.x0, s.kx, -1)} fill={IN_AVG} />
          <path d={stepPath(s.outMax, plot.zero, s.x0, s.kx, 1)} fill={OUT_MAX} />
          <path d={stepPath(s.outAvg, plot.zero, s.x0, s.kx, 1)} fill={OUT_AVG} />
        </g>
      ))}
      <g strokeDasharray="1 1" shapeRendering="crispEdges">
        {vertical.map((v, i) => (
          <line key={i} x1={v.x} x2={v.x} y1={TOP} y2={v.major ? BOTTOM + 4 : BOTTOM + 1} stroke={v.major ? "rgba(255,90,90,.5)" : "rgba(150,150,150,.42)"} />
        ))}
        {horizontal.map((h, i) => (
          <line key={i} y1={h.y} y2={h.y} x1={h.major ? LEFT - 2 : LEFT} x2={RIGHT + 3} stroke={h.major ? "rgba(255,80,80,.55)" : "rgba(150,150,150,.42)"} />
        ))}
      </g>
      <path d={`M${LEFT} ${plot.limit}H${RIGHT}`} stroke="#a30000" />
      <path d={`M${LEFT - 0.5} ${BOTTOM + 3}V480`} stroke="#7b7b7b" />
      <path d={`M${LEFT - 4} ${BOTTOM + 0.5}H${RIGHT + 5}`} stroke="#666" />
      <path d={`M${LEFT - 3.5} 483l3-5 3 5zM${RIGHT + 3} ${BOTTOM - 2.5}l5 3-5 3z`} fill="#555" />
      {plot.labels.map((l) => (
        <text key={l.text} x="60" y={l.y + 3.8} textAnchor="end" fill="#000">{l.text}</text>
      ))}
      {DAYS.map((d, i) => (
        <text key={d + i} x={plot.firstLabel + 1 + i * 76.85} y="797" textAnchor="middle" fill="#000">{d}</text>
      ))}
      <text transform="translate(1159.500 476) rotate(90)" fontSize="8" textLength="110" fill="#aaa">RRDTOOL / TOBI OETIKER</text>
    </svg>
  );
};

/* ---------- thumbnails ---------- */

interface Thumb {
  title: string;
  w: number;
  zero: number;
  lines: number[];
  up: string;
  down: string;
  kUp: number;
  kDown: number;
}

const linePath = (s: string, zero: number, dir: number, k: number, w: number) => {
  const pts = parse(s);
  return (
    `M${pts[0][0]} ${zero}` +
    pts.map(([x, h]) => `L${x} ${zero + dir * h * k}`).join("") +
    `L${Math.min(w, pts[pts.length - 1][0])} ${zero}Z`
  );
};

const westThumbs: Thumb[] = [
  { title: "6 Hours", w: 190, zero: 65, lines: [20, 170], kUp: 1, kDown: 1, up: "0 26,3 8,32 10,36 38,42 42,48 46,52 65,57 46,64 24,68 12,76 14,82 6,88 2,96 0", down: "0 112,3 112,6 60,12 68,16 52,18 98,34 104,38 108,41 70,44 26,50 20,64 26,72 24,78 16,84 4,93 0,98 2,116 6,120 10,126 14,132 20,140 12,150 8,160 10,166 6,190 5" },
  { title: "24 Hours", w: 190, zero: 28, lines: [17, 149], kUp: 0.6, kDown: 0.9, up: "2 8,20 10,24 0,30 4,34 12,44 26,50 10,64 8,80 8,100 5,118 4,134 8,150 10,156 24,162 10,170 8,188 6", down: "2 4,30 8,33 120,40 130,43 152,48 110,53 60,60 106,66 122,70 10,74 4,80 8,82 90,88 116,96 112,100 6,106 16,110 132,114 118,118 8,124 20,130 24,136 4,142 10,146 48,150 58,155 20,160 6,168 10,176 8,190 6" },
  { title: "48 Hours", w: 190, zero: 19, lines: [14, 95], kUp: 0.4, kDown: 0.7, up: "0 6,26 16,30 6,60 10,80 6,100 4,120 8,140 6,176 14,180 6,190 4", down: "0 161,3 161,5 4,12 10,14 70,20 50,26 50,32 86,36 30,40 14,44 30,50 70,54 90,58 128,62 80,74 78,82 48,86 4,96 2,110 10,113 60,118 76,126 70,130 12,136 20,138 60,144 40,150 60,156 20,160 8,170 24,176 4,190 4" },
  { title: "One Week", w: 190, zero: 29, lines: [26], kUp: 0.5, kDown: 0.6, up: "92 14,96 26,100 10,120 8,140 5,155 16,170 8,180 14,190 8", down: "92 10,94 66,98 76,105 74,110 30,120 16,126 86,130 106,136 110,138 150,141 40,146 30,150 60,153 110,156 60,164 82,168 20,174 70,178 74,182 40,188 20,190 4" },
  { title: "Two Weeks", w: 190, zero: 29, lines: [26], kUp: 0.4, kDown: 0.55, up: "141 16,143 26,147 10,160 8,168 16,178 10,182 16,190 10", down: "141 70,144 76,150 66,153 18,157 60,160 110,163 112,165 150,167 70,171 114,176 40,180 78,184 60,190 8" },
  { title: "One Month", w: 190, zero: 30, lines: [28], kUp: 0.3, kDown: 0.4, up: "169 26,174 10,180 16,190 10", down: "169 70,173 76,176 70,179 110,181 150,183 100,187 70,190 20" },
  { title: "Two Months", w: 190, zero: 30, lines: [28], kUp: 0.3, kDown: 0.3, up: "181 26,184 14,188 18,190 10", down: "181 78,185 80,187 150,188 100,190 20" },
  { title: "One Year", w: 190, zero: 30, lines: [], kUp: 0.4, kDown: 0.4, up: "188.500 26,190 26", down: "188.500 90,189.500 150,190 90" },
  { title: "Two Years", w: 190, zero: 30, lines: [], kUp: 0, kDown: 0, up: "190 0", down: "190 0" },
];

const skiThumbs: Thumb[] = [
  { title: "6 Hours", w: 183, zero: 121, lines: [26, 173], kUp: 1, kDown: 1, up: "0 76,6 90,9 120,12 84,20 72,26 60,36 62,38 100,44 98,46 60,54 64,60 46,76 48,80 72,86 110,90 50,96 30,104 42,118 52,120 26,128 18,140 20,148 22,152 38,155 20,160 14,172 12,183 10", down: "0 24,10 22,20 28,26 36,36 34,42 44,50 60,56 54,60 46,66 44,76 30,80 46,88 38,100 34,110 50,120 46,136 48,146 36,154 34,160 36,168 30,174 18,183 16" },
  { title: "24 Hours", w: 183, zero: 121, lines: [41, 176], kUp: 0.82, kDown: 0.93, up: "0 48,5 60,9 120,12 84,20 108,24 70,32 96,36 76,46 70,52 118,60 118,64 80,72 72,80 94,86 64,100 60,110 68,120 68,128 40,136 32,142 54,150 44,160 62,164 30,170 18,176 10,183 4", down: "0 14,6 24,14 40,22 52,34 48,40 38,50 52,60 60,76 54,90 60,104 46,110 34,120 26,126 10,136 20,148 34,160 22,170 28,178 14,183 16" },
  { title: "48 Hours", w: 183, zero: 124, lines: [41, 173], kUp: 0.75, kDown: 0.92, up: "0 108,3 120,6 82,14 80,18 120,24 118,28 86,38 84,46 120,54 110,60 80,66 56,72 38,84 26,92 38,96 98,104 70,112 80,118 98,124 72,132 90,140 60,150 70,158 50,164 54,170 36,178 14,183 8", down: "0 30,10 36,16 54,24 40,40 46,50 30,64 24,80 18,94 22,100 50,110 48,120 56,140 60,150 40,156 22,164 30,176 16,183 18" },
  { title: "One Week", w: 183, zero: 139, lines: [77], kUp: 0.66, kDown: 0.75, up: "52 8,62 14,66 54,70 6,80 8,84 36,88 16,91 110,96 138,99 70,104 72,112 60,115 94,124 70,132 88,140 78,148 66,156 30,160 72,168 68,174 56,180 38,183 10", down: "31 3,42 3,42.100 0,52 2,84 10,92 34,100 22,112 26,118 42,126 24,140 42,148 40,154 18,160 24,168 36,176 42,183 14" },
  { title: "Two Weeks", w: 179, zero: 139, lines: [82], kUp: 0.6, kDown: 0.7, up: "117 10,121 12,123 50,125 6,130 30,134 110,138 138,142 70,147 94,152 80,158 88,164 64,166 30,170 70,176 40,179 10", down: "105 3,110 3,110.100 0,117 4,130 10,136 34,142 22,148 42,156 30,160 42,166 18,173 40,179 14" },
  { title: "One Month", w: 179, zero: 139, lines: [92], kUp: 0.5, kDown: 0.65, up: "152 50,154 50,156 16,158 60,161 136,164 90,170 86,176 60,179 10", down: "145 3,149 3,149.100 0,152 4,158 10,164 42,170 38,176 42,179 14" },
  { title: "Two Months", w: 179, zero: 139, lines: [122], kUp: 0.4, kDown: 0.6, up: "167 50,170 110,172 138,176 80,179 70", down: "167 14,171 42,179 36" },
  { title: "One Year", w: 179, zero: 139, lines: [], kUp: 0.5, kDown: 0.4, up: "178 138,179 138", down: "178 42,179 42" },
  { title: "Two Years", w: 179, zero: 139, lines: [], kUp: 0, kDown: 0, up: "179 0", down: "179 0" },
];

const ThumbGraph = ({ t }: { t: Thumb }) => (
  <svg width="112" height="60" viewBox={`0 0 ${t.w} 180`} preserveAspectRatio="none">
    <path d={linePath(t.up, t.zero, -1, 1, t.w)} fill={IN_MAX} />
    <path d={linePath(t.up, t.zero, -1, t.kUp, t.w)} fill={IN_AVG} />
    <path d={linePath(t.down, t.zero, 1, 1, t.w)} fill={OUT_MAX} />
    <path d={linePath(t.down, t.zero, 1, t.kDown, t.w)} fill={OUT_AVG} />
    {t.title.includes("Hours") && t.w === 190 && <path d={`M${t.title === "6 Hours" ? 98 : 0} ${t.zero}h190`} stroke={OUT_AVG} strokeWidth="2" />}
    {t.lines.map((y) => (
      <rect key={y} x="0" y={Math.floor(y / 3) * 3} width={t.w} height="3" fill="#a80000" />
    ))}
  </svg>
);

/* ---------- composed pieces ---------- */

interface TabInfo { title: string; icon?: IconName; active?: boolean; }

const Tab = ({ t, w }: { t: TabInfo; w: number }) => (
  <TabBox $w={w} $active={t.active}>
    <TabShape width={w} height="25" viewBox={`0 0 ${w} 25`}>
      <path
        d={`M0 25.500C5 24 5 2 11 1.500H${w - 11}C${w - 5} 2 ${w - 5} 24 ${w} 25.500`}
        fill={t.active ? "#fafafa" : "#bfc9d8"}
        stroke={t.active ? "#8f9aa6" : "#7e8a98"}
      />
    </TabShape>
    {t.icon && <Icon name={t.icon} />}
    <TabTitle>{t.title}</TabTitle>
    <Icon name="x" size={12} />
  </TabBox>
);

const Tools = ({ host, path }: { host: string; path: string }) => (
  <Toolbar>
    <NavIcons>
      <Icon name="back" />
      <Icon name="forward" />
      <Icon name="reload" />
      <Icon name="home" />
    </NavIcons>
    <AddressBar>
      <Icon name="doc" size={17} />
      <b>{host}</b>
      {path}
      <Icon name="star" size={19} />
    </AddressBar>
    <Extensions>
      <Icon name="note" size={18} />
      <AbpBadge>
        <Icon name="abp" size={18} />
        <span>ABP</span>
      </AbpBadge>
      <Icon name="g" size={18} />
      <Icon name="menu" size={18} />
    </Extensions>
  </Toolbar>
);

const Controls = ({ light }: { light?: boolean }) => {
  const ink = light ? "#556" : "#fff";
  return (
    <Caption $light={light}>
      <CaptionButton $light={light}>
        <svg width="12" height="10" viewBox="0 0 12 10"><path d="M1 5.500h10v3H1z" fill="#fff" stroke={light ? ink : "#455"} strokeWidth=".8" /></svg>
      </CaptionButton>
      <CaptionButton $light={light}>
        <svg width="12" height="12" viewBox="0 0 12 12"><path d="M4 3V1h7v7H9M1.500 3.500h6.500v7h-6.500zM4 6h1.500v2H4z" fill="none" stroke={ink} strokeWidth="1.400" /></svg>
      </CaptionButton>
      <CaptionButton $light={light} $close>
        <svg width="12" height="10" viewBox="0 0 12 10"><path d="m2 1 8 8m0-8-8 8" stroke={light ? "#667" : "#fff"} strokeWidth="2.600" /></svg>
      </CaptionButton>
    </Caption>
  );
};

const menuItems: { label: string; icon?: IconName }[] = [
  { label: "Overview", icon: "bulb" },
  { label: "Devices", icon: "server" },
  { label: "Ports", icon: "plug" },
  { label: "Health", icon: "gauge" },
  { label: "Routing", icon: "route" },
  { label: "Plugins" },
  { label: "System", icon: "wrench" },
];

const SiteNav = ({ open }: { open?: string }) => (
  <Navbar>
    <Brand>LibreNMS</Brand>
    {menuItems.map((m) => (
      <NavItem key={m.label} $open={m.label === open}>
        {m.icon && <Icon name={m.icon} />}
        {m.label}
        <Caret />
        {m.label === open && (
          <Dropdown>
            <Icon name="omega" size={14} />
            OSPF Devices
          </Dropdown>
        )}
      </NavItem>
    ))}
    <Search placeholder="Global Search" />
  </Navbar>
);

interface PageProps {
  device: string;
  port: string;
  time: string;
  thumbs: Thumb[];
  plot: Plot;
  legend: { head: string; input: string; output: string; total: string };
}

const Page = ({ device, port, time, thumbs, plot, legend }: PageProps) => (
  <>
    <Well $h={60} $mt={9}>
      <Crumbs>
        <span><b>{device}</b> <i>::</i> Port <a>{port}</a> <i>::</i> Bits</span>
        <Select>Bits<SelectArrow /></Select>
      </Crumbs>
    </Well>
    <Well $h={249} $mt={20}>
      <Strip>
        {thumbs.map((t) => (
          <StripCell key={t.title}>
            <h4>{t.title}</h4>
            <ThumbGraph t={t} />
          </StripCell>
        ))}
      </Strip>
      <Rule />
      <RangeForm>
        <b>From:</b>
        <DateInput defaultValue={`2014-09-27 ${time}`} />
        <b>To:</b>
        <DateInput defaultValue={`2014-10-04 ${time}`} />
        <UpdateButton type="button">Update</UpdateButton>
      </RangeForm>
      <Rule />
      <Links>
        <a>Hide Legend</a>|<a>Show Previous</a>
        <a>Show RRD Command</a>
      </Links>
    </Well>
    <GraphArea>
      <TrafficGraph plot={plot} />
      <Legend>
        <LegendRow>{legend.head}</LegendRow>
        <LegendRow><Swatch $c={IN_AVG} />{legend.input}</LegendRow>
        <LegendRow><Swatch $c={OUT_AVG} />{legend.output}</LegendRow>
        <LegendRow>{legend.total}</LegendRow>
      </Legend>
    </GraphArea>
    <Footer>
      Powered by <a>LibreNMS 2014.master</a>.<br />
      LibreNMS is <a>Free Software</a>, released under the <a>GNU GPLv3</a>.<br />
      Copyright © 2013-2014 by the LibreNMS Contributors.<br />
      Copyright © 2006-2012 by Adam Armstrong.
    </Footer>
  </>
);

const tabs: TabInfo[] = [
  { title: "pp23:ip-plan", icon: "wiki" },
  { title: "pp23:start [T", icon: "wiki" },
  { title: "(3) Error | Tr", icon: "trello" },
  { title: "404 Not Fou", icon: "doc" },
  { title: "(3) Opprigg", icon: "trelloRed" },
  { title: "(3) Opprigg", icon: "trelloRed" },
  { title: "Geekevents", icon: "geek" },
  { title: "pp23 linknet", icon: "gdoc" },
  { title: "Ny fane" },
  { title: "Devices - Li", icon: "doc" },
  { title: "LibreNMS", icon: "doc", active: true },
  { title: "infoskjerm", icon: "doc" },
  { title: "librenms/lib", icon: "github" },
  { title: "Fwd: Nettpr", icon: "gmail" },
];

interface Task { icon: IconName; label?: string; active?: boolean; h?: number; gap?: number; }

const tasks: Task[] = [
  { icon: "folder", label: "A.Million....", h: 30, gap: 0 },
  { icon: "folderBox", label: "Dropbox (...", h: 30, gap: 0 },
  { icon: "folder", label: "Screenshots", h: 29 },
  { icon: "putty" },
  { icon: "chrome", label: "Google ...", active: true },
  { icon: "opera" },
  { icon: "bird", label: "NFV – hve..." },
  { icon: "clap" },
  { icon: "hotspot", label: "Connectif..." },
  { icon: "hotspotBlue", label: "Connectif..." },
  { icon: "utorrent", label: "µTorrent 3..." },
  { icon: "spotify", label: "Spotify" },
  { icon: "skype", label: "Skype™ - ..." },
  { icon: "monitor", label: "Windows ..." },
  { icon: "vm", label: "Windows ..." },
  { icon: "system", label: "System" },
  { icon: "picture", label: "net pp23 f...", h: 29, gap: 0 },
  { icon: "picture", label: "Screensho...", h: 29 },
  { icon: "notepad", label: "Untitled - ..." },
  { icon: "speaker", label: "Volume M..." },
  { icon: "dropbox", label: "Dropbox P..." },
];

const TaskEntry = ({ t }: { t: Task }) => (
  <TaskRow $h={t.h ?? 28} $gap={t.gap ?? 4}>
    {t.label ? (
      <TaskButton $active={t.active}>
        <Icon name={t.icon} />
        {t.label}
      </TaskButton>
    ) : (
      <TaskLoose><Icon name={t.icon} /></TaskLoose>
    )}
    {t.active && <><Stack /><Stack /></>}
  </TaskRow>
);

const StartOrb = () => (
  <svg width="40" height="40" viewBox="0 0 40 40">
    <defs>
      <radialGradient id="orb" cx="50%" cy="85%" r="80%">
        <stop offset="0" stopColor="#5fd3f5" />
        <stop offset=".5" stopColor="#1e6ba8" />
        <stop offset="1" stopColor="#6f9cc0" />
      </radialGradient>
    </defs>
    <circle cx="20" cy="20" r="18" fill="url(#orb)" stroke="#8fb6cf" />
    <path d="M4 17C6 3 34 3 36 17 26 22 14 14 4 17z" fill="#fff" opacity=".25" />
    <path d="M12 12c3-2 5-1.500 7.500-.3L18 19c-2.500-1.300-5-1.500-8 .2z" fill="#ea5b28" />
    <path d="M21 12.300c3 1.200 5 .8 8-.5l-2 7.700c-2.500 1.300-5 1.200-7.500 0z" fill="#8cc63e" />
    <path d="M9.500 21c3-1.600 5.500-1.400 8-.2L16 28c-2.500-1.300-5-1.300-8 .3z" fill="#3f9be5" />
    <path d="M19 21.300c3 1.200 5 1 8-.3l-2 7.600c-2.500 1.200-5 1.200-7.600 0z" fill="#fcc51d" />
  </svg>
);

const HEAD = "bps      Now       Ave      Max      95th %";

export default function App() {
  return (
    <>
      <Global />
      <Desktop>
        <BrowserWindow $w={1816}>
          <TabStrip>
            {tabs.map((t, i) => (
              <Tab key={i} t={t} w={126.85} />
            ))}
            <NewTab />
            <Controls />
          </TabStrip>
          <Tools host="librenms.pp23.polarparty.no" path="/graphs/to=1412413445/id=53/type=port_bits/from=1411808645/" />
          <SiteNav open="Routing" />
          <Page
            device="westgw.pp23.polarparty.no"
            port="GigabitEthernet1/0/10"
            time="11:04"
            thumbs={westThumbs}
            plot={westPlot}
            legend={{
              head: HEAD,
              input: "In   346.30k    6.76M  140.65M   25.55M",
              output: "Out    5.14M   75.83M  743.05M  322.68M",
              total: "Total   4.91T  (In 401.65G  Out   4.50T)",
            }}
          />
          <StatusBubble>librenms.pp23.polarparty.no/routing/</StatusBubble>
          <Shelf>
            <Download>
              <Icon name="png" />
              <span>net pp23 fredag 1800.png</span>
              <DownloadMenu><Caret /></DownloadMenu>
            </Download>
            <Icon name="down" size={13} />
            <ShowAll>Vis alle nedlastinger</ShowAll>
            <Icon name="x" size={13} />
          </Shelf>
        </BrowserWindow>
        <Taskbar>
          <Orb><StartOrb /></Orb>
          {tasks.map((t, i) => (
            <TaskEntry key={i} t={t} />
          ))}
          <TrayArrow />
          <Tray>
            <Icon name="flag" />
            <Icon name="net" />
            <Icon name="volume" />
            <Icon name="dropboxErr" />
          </Tray>
          <Clock>11:05<br />lørdag<br />04.10.2014</Clock>
          <ShowDesktop />
        </Taskbar>
        <BrowserWindow $w={1921}>
          <TabStrip $light>
            <GhostLabel $left={230} $w={120} $dark />
            <GhostLabel $left={400} $w={16} $dark />
            <GhostLabel $left={610} $w={110} />
            <GhostLabel $left={790} $w={130} />
            <GhostLabel $left={1000} $w={110} />
            <GhostLabel $left={1190} $w={110} />
            <Tab t={{ title: "LibreNMS", icon: "doc", active: true }} w={204} />
            <NewTab $light />
            <Controls light />
          </TabStrip>
          <Tools host="librenms.pp23.polarparty.no" path="/graphs/to=1412412810/id=157/type=port_bits/from=1411808010/" />
          <SiteNav />
          <Page
            device="skigw.pp23.polarparty.no"
            port="TenGigabitEthernet5/4"
            time="10:53"
            thumbs={skiThumbs}
            plot={skiPlot}
            legend={{
              head: HEAD,
              input: "In    65.97M  483.66M    2.25G    1.02G",
              output: "Out  135.78M  224.00M  683.35M  524.75M",
              total: "Total  42.19T  (In  28.84T  Out  13.36T)",
            }}
          />
        </BrowserWindow>
      </Desktop>
    </>
  );
}
